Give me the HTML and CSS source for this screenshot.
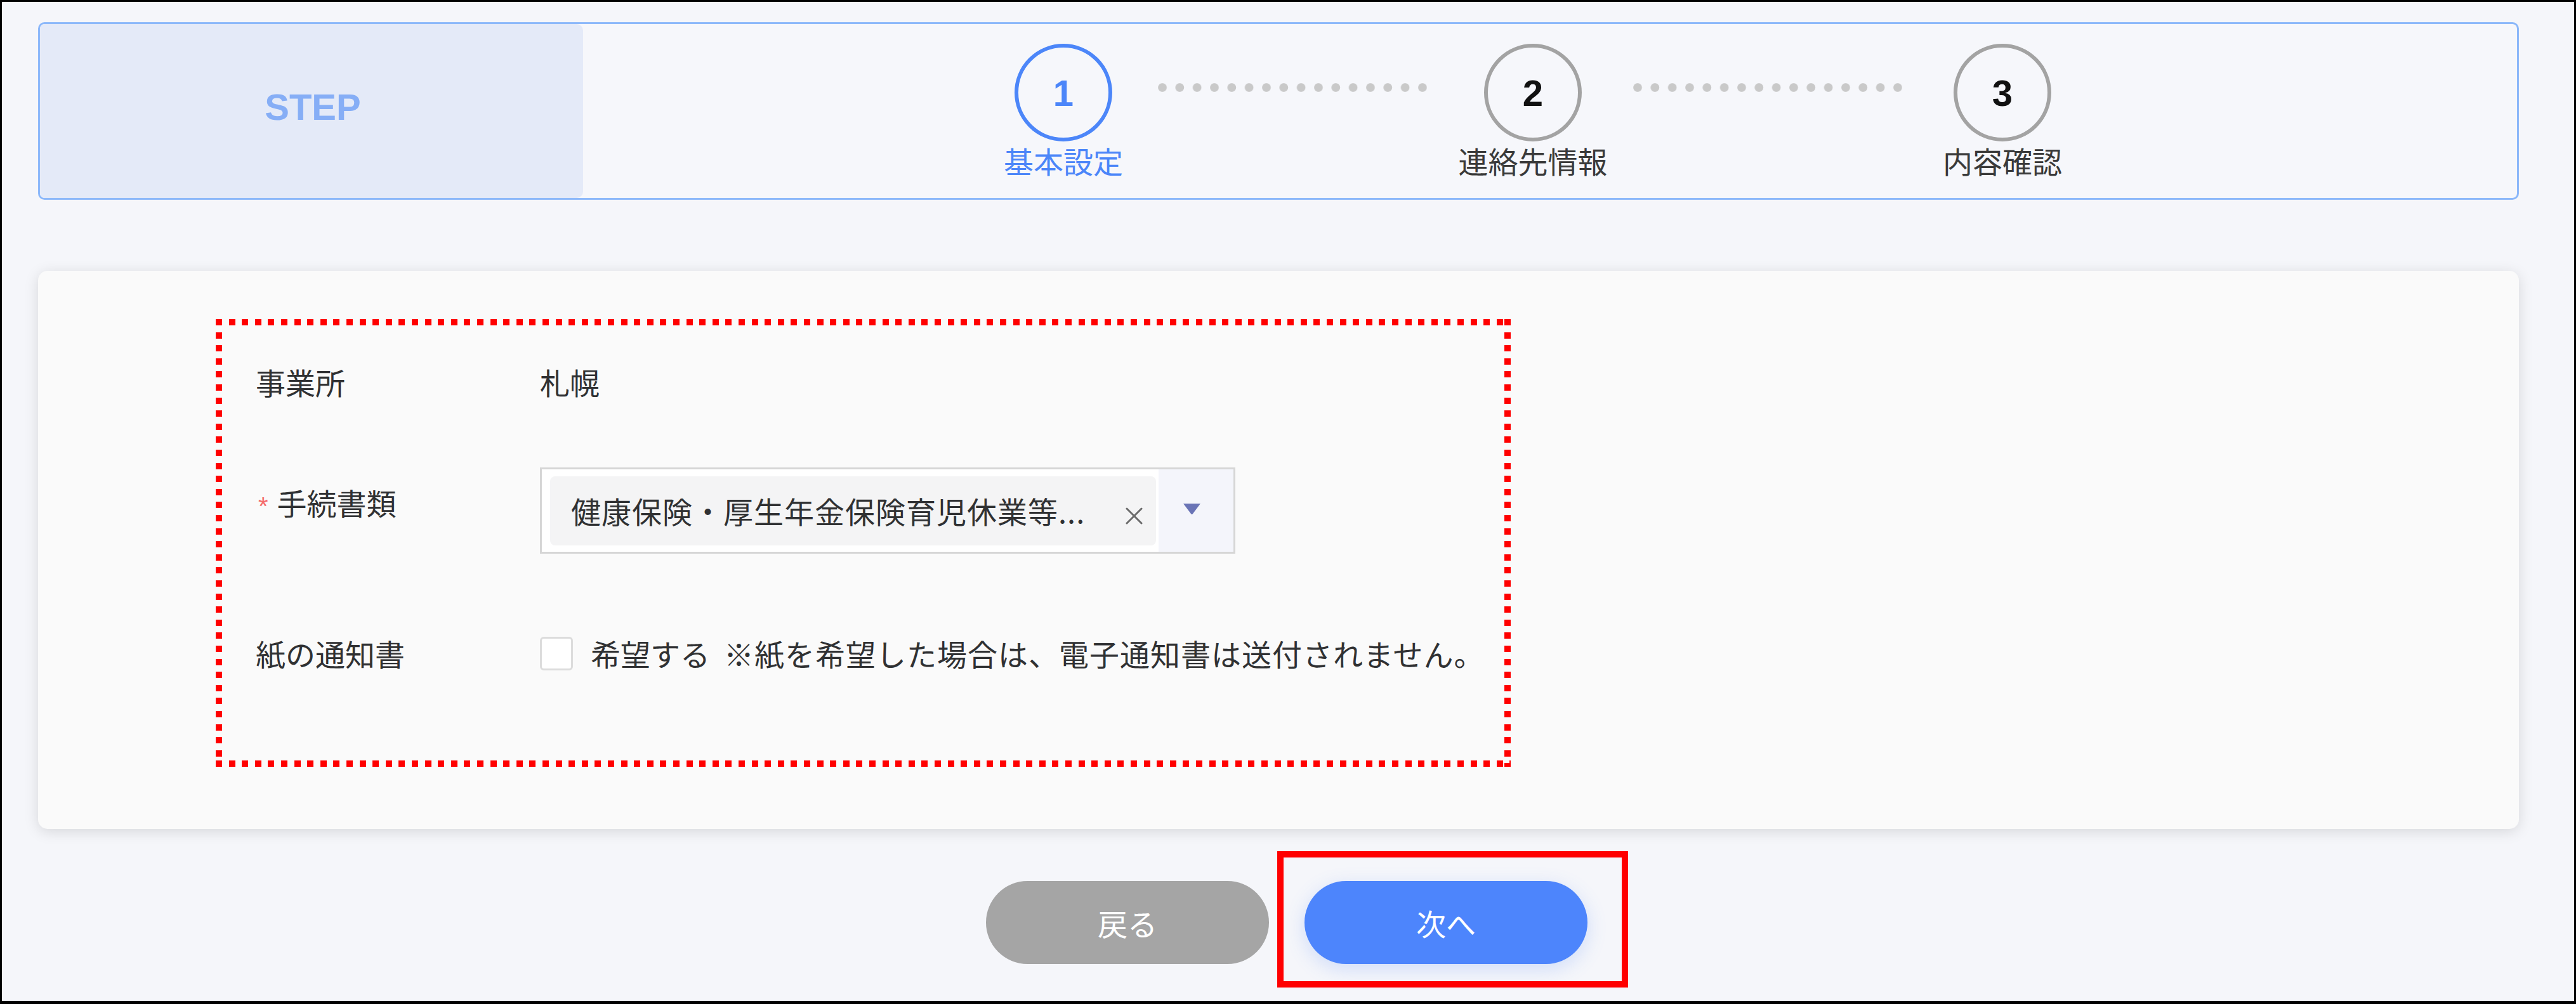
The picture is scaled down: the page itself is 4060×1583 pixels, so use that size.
FILE: index.html
```html
<!DOCTYPE html>
<html lang="ja">
<head>
<meta charset="utf-8">
<title>手続き - 基本設定</title>
<link rel="stylesheet" href="styles.css">
</head>
<body>
<div class="frame">
  <div class="steps">
    <div class="steps-title">STEP</div>
    <div class="steps-track">
      <div class="step is-active">
        <div class="step-circle">1</div>
        <div class="step-label">基本設定</div>
      </div>
      <div class="step-line step-line-first"><span class="dots"></span></div>
      <div class="step">
        <div class="step-circle">2</div>
        <div class="step-label">連絡先情報</div>
      </div>
      <div class="step-line"><span class="dots"></span></div>
      <div class="step">
        <div class="step-circle">3</div>
        <div class="step-label">内容確認</div>
      </div>
    </div>
  </div>

  <div class="card">
    <div class="form">
      <div class="row row-office">
        <div class="label">事業所</div>
        <div class="value">札幌</div>
      </div>
      <div class="row row-docs">
        <div class="label label-top"><span class="req">*</span>手続書類</div>
        <div class="select">
          <div class="tag">
            <span class="tag-text">健康保険・厚生年金保険育児休業等...</span>
            <svg class="tag-close" width="29" height="29" viewBox="0 0 29 29" aria-hidden="true">
              <path d="M3 3 L26 26 M26 3 L3 26" stroke="#6b6b6b" stroke-width="3" stroke-linecap="round" fill="none"/>
            </svg>
          </div>
          <div class="select-arrow">
            <svg width="29" height="19" viewBox="0 0 29 19" aria-hidden="true">
              <path d="M1 1 L28 1 L16 17 Q14.5 19 13 17 Z" fill="#6a74b6"/>
            </svg>
          </div>
        </div>
      </div>
      <div class="row row-paper">
        <div class="label">紙の通知書</div>
        <span class="checkbox"></span>
        <span class="check-text">希望する</span>
        <span class="note">※紙を希望した場合は、電子通知書は送付されません。</span>
      </div>
    </div>
  </div>

  <div class="actions">
    <button class="btn btn-back" type="button">戻る</button>
    <span class="highlight">
      <button class="btn btn-next" type="button">次へ</button>
    </span>
  </div>
</div>
</body>
</html>
```

FILE: styles.css
```css
html, body {
  margin: 0;
  padding: 0;
  background: #f5f6fa;
}

body {
  font-family: "Noto Sans CJK JP", "Noto Sans", sans-serif;
  color: #303133;
}

.frame {
  width: 4060px;
  height: 1583px;
  box-sizing: border-box;
  border-style: solid;
  border-color: #000;
  border-width: 3px 3px 5px 3px;
  background: #f5f6fa;
  padding: 32px 87px 0 57px;
  overflow: hidden;
}

/* ---------- step header ---------- */
.steps {
  height: 280px;
  box-sizing: border-box;
  border: 3px solid #8cb8fa;
  border-radius: 10px;
  background: #f6f7fb;
  display: flex;
  overflow: hidden;
}

.steps-title {
  width: 856px;
  flex: none;
  background: #e4eaf8;
  border-radius: 0 10px 10px 0;
  display: flex;
  align-items: center;
  justify-content: center;
  padding-bottom: 14px;
  padding-left: 4px;
  box-sizing: border-box;
  font-family: "Liberation Sans", "Noto Sans CJK JP", sans-serif;
  font-weight: bold;
  font-size: 58px;
  color: #86aef6;
}

.steps-track {
  display: flex;
  align-items: flex-start;
  padding-left: 632px;
  padding-top: 31px;
}

.step {
  width: 250px;
  flex: none;
  display: flex;
  flex-direction: column;
  align-items: center;
}

.step-circle {
  width: 154px;
  height: 154px;
  box-sizing: border-box;
  border: 6px solid #a3a3a3;
  border-radius: 50%;
  display: flex;
  align-items: center;
  justify-content: center;
  font-family: "Liberation Sans", sans-serif;
  font-weight: bold;
  font-size: 58px;
  color: #111;
  background: #f6f7fb;
}

.step-label {
  margin-top: 2px;
  font-size: 47px;
  line-height: 56px;
  color: #3a3a3a;
  white-space: nowrap;
}

.step.is-active .step-circle {
  border-color: #4c86f9;
  color: #4c86f9;
}

.step.is-active .step-label {
  color: #4c86f9;
}

.step-line {
  width: 490px;
  flex: none;
  display: flex;
  justify-content: center;
  padding-top: 62px;
}

.step-line-first {
  justify-content: flex-start;
  padding-left: 24px;
  box-sizing: border-box;
}

.dots {
  display: block;
  width: 424px;
  height: 14px;
  background: radial-gradient(circle at 7px 7px, #c9c9c9 6.3px, rgba(201,201,201,0) 7.3px) 0 0 / 27.33px 14px repeat-x;
}

/* ---------- form card ---------- */
.card {
  margin-top: 112px;
  background: #fafafa;
  border-radius: 15px;
  box-shadow: 0 4px 22px rgba(0, 0, 0, 0.13);
  padding: 76px 0 98px 280px;
}

.form {
  width: 2041px;
  box-sizing: border-box;
  padding: 71px 0 151px 63px;
  background:
    repeating-linear-gradient(90deg, #ff0000 0 10px, transparent 10px 20.6px) left top / 100% 10px no-repeat,
    repeating-linear-gradient(90deg, #ff0000 0 10px, transparent 10px 20.6px) left bottom / 100% 10px no-repeat,
    repeating-linear-gradient(180deg, #ff0000 0 10px, transparent 10px 20.6px) left top / 10px 100% no-repeat,
    repeating-linear-gradient(180deg, #ff0000 0 10px, transparent 10px 20.6px) right top / 10px 100% no-repeat;
}

.row {
  display: flex;
  align-items: center;
  font-size: 47px;
  line-height: 56px;
  color: #303133;
}

.row-docs {
  margin-top: 107px;
  align-items: flex-start;
}

.row-paper {
  margin-top: 129px;
}

.label {
  width: 448px;
  flex: none;
  white-space: nowrap;
}

.label-top {
  margin-top: 27px;
}

.req {
  color: #f56c6c;
  font-family: "Liberation Sans", sans-serif;
  font-size: 40px;
  margin-left: 4px;
  margin-right: 14px;
}

.value {
  white-space: nowrap;
}

.select {
  width: 1096px;
  height: 136px;
  box-sizing: border-box;
  border: 3px solid #d6d6d6;
  background: #fff;
  display: flex;
  align-items: center;
  padding-left: 13px;
}

.tag {
  width: 955px;
  height: 109px;
  flex: none;
  box-sizing: border-box;
  background: #f4f4f5;
  border-radius: 8px;
  display: flex;
  align-items: center;
  padding-left: 33px;
  padding-right: 20px;
  color: #303133;
  font-size: 47px;
  white-space: nowrap;
}

.tag-text {
  letter-spacing: 1px;
}

.tag-close {
  margin-left: auto;
  margin-top: 16px;
  flex: none;
}

.select-arrow {
  align-self: stretch;
  flex: 1;
  margin-left: 4px;
  background: #f4f5fb;
  display: flex;
  align-items: center;
  justify-content: center;
  padding-right: 14px;
  padding-bottom: 6px;
}

.checkbox {
  width: 52px;
  height: 53px;
  box-sizing: border-box;
  border: 3px solid #dcdcdc;
  border-radius: 6px;
  background: #fff;
  flex: none;
}

.check-text {
  margin-left: 28px;
  white-space: nowrap;
}

.note {
  margin-left: 22px;
  letter-spacing: 1px;
  white-space: nowrap;
}

/* ---------- buttons ---------- */
.actions {
  margin-top: 82px;
  padding-left: 26px;
  display: flex;
  justify-content: center;
  gap: 56px;
}

.btn {
  width: 446px;
  height: 131px;
  border: none;
  border-radius: 66px;
  font-family: "Noto Sans CJK JP", sans-serif;
  font-size: 47px;
  color: #fff;
  padding: 0;
  cursor: pointer;
}

.btn-back {
  background: #a5a5a5;
}

.btn-next {
  background: #4d85fc;
  box-shadow: 0 8px 30px rgba(77, 133, 252, 0.22);
}

.highlight {
  position: relative;
  display: flex;
}

.highlight::after {
  content: "";
  position: absolute;
  top: -47px;
  left: -43px;
  right: -64px;
  bottom: -37px;
  border: 10px solid #ff0000;
  pointer-events: none;
}
```
